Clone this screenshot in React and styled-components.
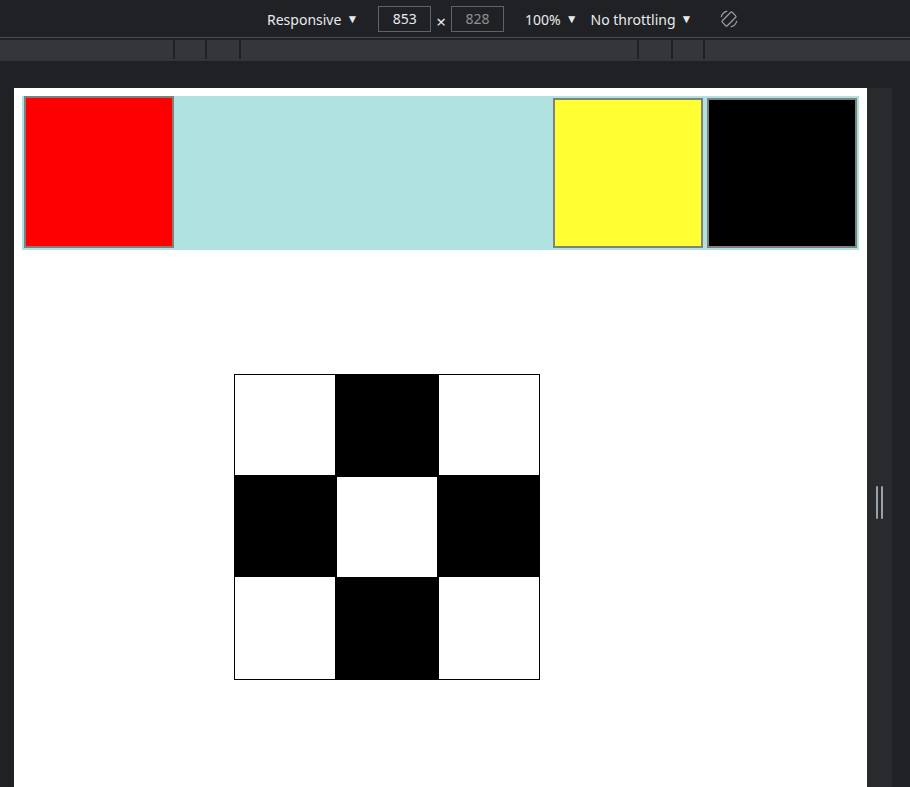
import React from 'react'
import styled, { createGlobalStyle } from 'styled-components'

const GlobalStyle = createGlobalStyle`
  html, body {
    margin: 0;
    padding: 0;
    background: #202124;
    overflow: hidden;
  }
`

const RotateIcon = () => (
  <svg width="20" height="20" viewBox="0 0 20 20" fill="none" stroke="#9aa0a6" strokeWidth="1.2">
    <rect x="6.5" y="3" width="7" height="14" rx="1" transform="rotate(45 10 10)" />
    <path d="M2.2 8.2 A8 8 0 0 1 8.2 2.2" />
    <path d="M17.8 11.8 A8 8 0 0 1 11.8 17.8" />
  </svg>
)

const App = () => {
  return (
    <>
      <GlobalStyle />
      <Window>
        <Toolbar>
          <Menu>Responsive <Caret>▼</Caret></Menu>
          <SizeBox>853</SizeBox>
          <Times>×</Times>
          <SizeBox $muted>828</SizeBox>
          <Menu $gap={21}>100% <Caret>▼</Caret></Menu>
          <Menu $gap={13}>No throttling <Caret>▼</Caret></Menu>
          <IconButton><RotateIcon /></IconButton>
        </Toolbar>

        <Ruler>
          <RulerSeg $w={175} />
          <RulerSeg $w={32} />
          <RulerSeg $w={34} />
          <RulerSeg $w={398} />
          <RulerSeg $w={34} />
          <RulerSeg $w={32} />
          <RulerSeg $last />
        </Ruler>

        <Viewport>
          <Page>
            <Band>
              <Square $color="#ff0000" $tall />
              <Spacer />
              <Square $color="#ffff33" />
              <Square $color="#000000" />
            </Band>

            <Board>
              <BoardRow $h={100}>
                <Cell $w={100} />
                <Cell $w={104} $dark />
                <Cell $w={100} />
              </BoardRow>
              <BoardRow $h={102}>
                <Cell $w={102} $dark />
                <Cell $w={100} $inset />
                <Cell $w={102} $dark />
              </BoardRow>
              <BoardRow $h={102}>
                <Cell $w={100} />
                <Cell $w={104} $dark />
                <Cell $w={100} />
              </BoardRow>
            </Board>
          </Page>
          <Gutter>
            <Handle />
            <Handle />
          </Gutter>
        </Viewport>
      </Window>
    </>
  )
}

const Window = styled.div`
  width: 910px;
  height: 787px;
  background: #202124;
  overflow: hidden;
  display: flex;
  flex-direction: column;
  font-family: "Noto Sans", "Open Sans", sans-serif;
`

const Toolbar = styled.div`
  height: 38px;
  flex-shrink: 0;
  display: flex;
  align-items: center;
  padding: 2px 0 0 267px;
  border-bottom: 1px solid #4a4c50;
  box-sizing: border-box;
  color: #e8eaed;
  font-size: 14px;
`

const Menu = styled.div`
  display: flex;
  align-items: center;
  margin-left: ${p => p.$gap || 0}px;
  white-space: nowrap;
  line-height: 1;
`

const Caret = styled.span`
  font-size: 12px;
  margin-left: 5px;
  margin-bottom: 2px;
`

const SizeBox = styled.div`
  width: 53px;
  height: 26px;
  margin-top: -2px;
  box-sizing: border-box;
  border: 1px solid #5f6368;
  background: #202124;
  color: ${p => (p.$muted ? '#8c9096' : '#e8eaed')};
  display: flex;
  align-items: center;
  justify-content: center;
  font-size: 14px;
  margin-left: ${p => (p.$muted ? 5 : 20)}px;
`

const Times = styled.span`
  margin-left: 5px;
  font-size: 17px;
  color: #e8eaed;
  padding-top: 3px;
`

const IconButton = styled.div`
  margin-left: 27px;
  margin-top: -2px;
  width: 20px;
  height: 20px;
  display: flex;
`

const Ruler = styled.div`
  margin-top: 2px;
  height: 21px;
  flex-shrink: 0;
  display: flex;
  background: #35363a;
`

const RulerSeg = styled.div`
  width: ${p => (p.$last ? 'auto' : `${p.$w}px`)};
  flex: ${p => (p.$last ? 1 : 'none')};
  box-sizing: border-box;
  border-right: ${p => (p.$last ? 'none' : '2px solid #202124')};
  height: 19px;
`

const Viewport = styled.div`
  display: flex;
  align-items: flex-start;
  padding: 27px 0 0 14px;
`

const Page = styled.div`
  width: 853px;
  height: 828px;
  flex-shrink: 0;
  background: #ffffff;
  padding: 8px;
  box-sizing: border-box;
`

const Band = styled.div`
  display: flex;
  align-items: flex-end;
  gap: 4px;
  padding: 0 2px 2px;
  background: #b0e3df;
`

const Spacer = styled.div`
  flex: 1;
`

const Square = styled.div`
  width: 150px;
  height: ${p => (p.$tall ? 152 : 150)}px;
  box-sizing: border-box;
  border: 2px solid #808080;
  background: ${p => p.$color};
`

const Board = styled.div`
  margin: 124px 0 0 212px;
  width: 306px;
  border: 1px solid #000;
  box-sizing: border-box;
  display: flex;
  flex-direction: column;
`

const BoardRow = styled.div`
  display: flex;
  height: ${p => p.$h}px;
`

const Cell = styled.div`
  width: ${p => p.$w}px;
  height: 100%;
  box-sizing: border-box;
  background: ${p => (p.$dark ? '#000' : '#fff')};
  border-top: ${p => (p.$inset ? '2px solid #000' : 'none')};
`

const Gutter = styled.div`
  width: 25px;
  height: 828px;
  flex-shrink: 0;
  background: #292a2d;
  display: flex;
  align-items: center;
  justify-content: center;
  gap: 3px;
`

const Handle = styled.div`
  width: 2px;
  height: 33px;
  background: #9aa0a6;
  border-radius: 1px;
`

export default App
